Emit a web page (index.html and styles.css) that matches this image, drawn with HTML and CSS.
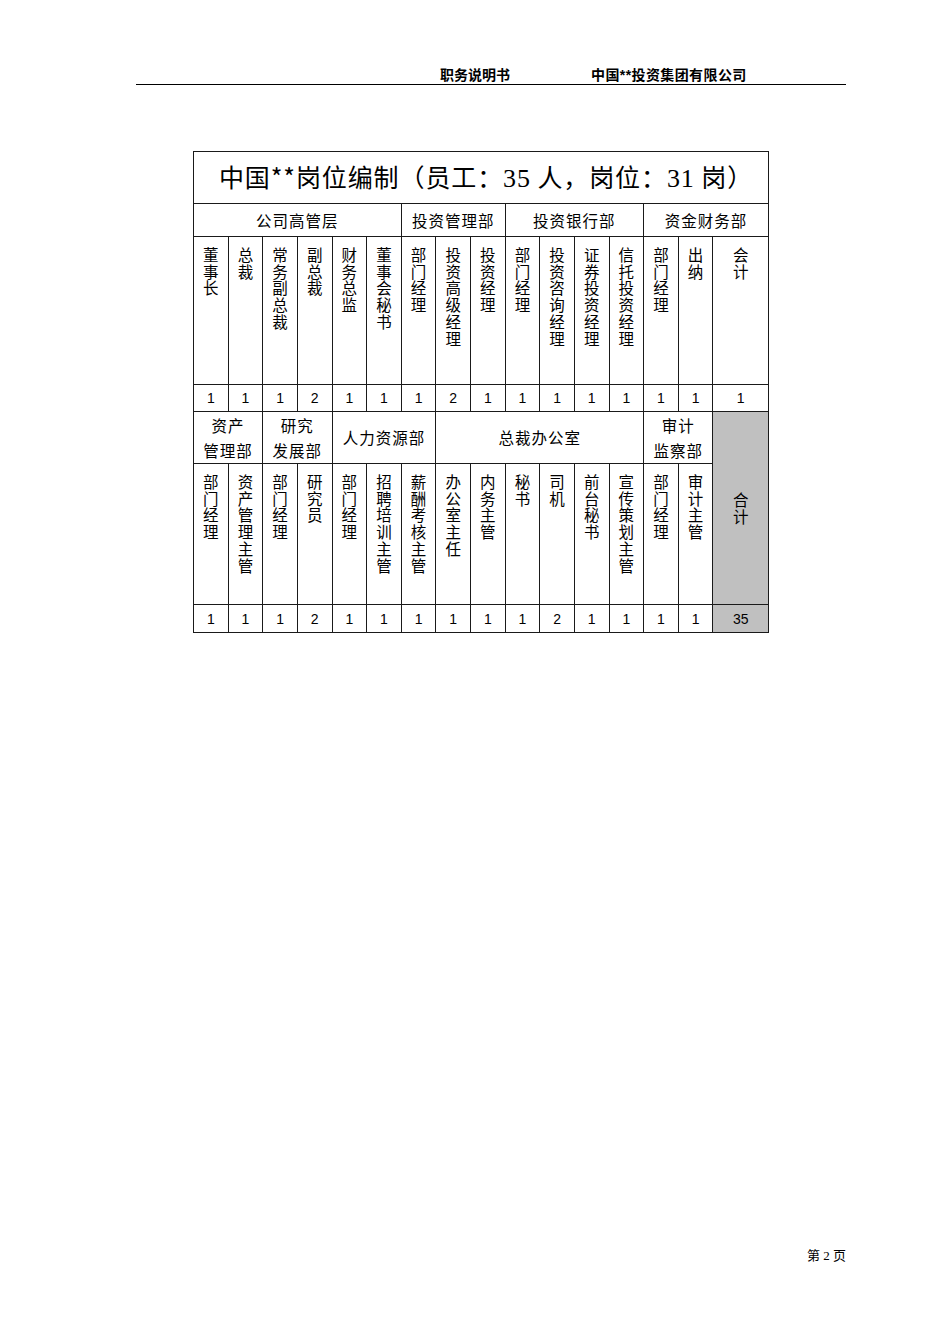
FILE: index.html
```html
<!DOCTYPE html>
<html lang="zh-CN">
<head>
<meta charset="utf-8">
<title>职务说明书</title>
<link rel="stylesheet" href="styles.css">
</head>
<body>
<div class="page">
  <header class="doc-header">
    <span class="doc-title">职务说明书</span>
    <span class="doc-company">中国**投资集团有限公司</span>
  </header>

  <table class="staff">
    <colgroup>
      <col class="c"><col class="c"><col class="c"><col class="c"><col class="c"><col class="c"><col class="c"><col class="c">
      <col class="c"><col class="c"><col class="c"><col class="c"><col class="c"><col class="c"><col class="c"><col class="c-wide">
    </colgroup>
    <tr class="r-title">
      <td colspan="16" class="title">中国**岗位编制（员工：<span class="num-serif">35</span> 人，岗位：<span class="num-serif">31</span> 岗）</td>
    </tr>
    <tr class="r-dept">
      <td colspan="6" class="dept">公司高管层</td>
      <td colspan="3" class="dept">投资管理部</td>
      <td colspan="4" class="dept">投资银行部</td>
      <td colspan="3" class="dept">资金财务部</td>
    </tr>
    <tr class="r-vert1">
      <td class="vc"><div class="v">董事长</div></td>
      <td class="vc"><div class="v">总裁</div></td>
      <td class="vc"><div class="v">常务副总裁</div></td>
      <td class="vc"><div class="v">副总裁</div></td>
      <td class="vc"><div class="v">财务总监</div></td>
      <td class="vc"><div class="v">董事会秘书</div></td>
      <td class="vc"><div class="v">部门经理</div></td>
      <td class="vc"><div class="v">投资高级经理</div></td>
      <td class="vc"><div class="v">投资经理</div></td>
      <td class="vc"><div class="v">部门经理</div></td>
      <td class="vc"><div class="v">投资咨询经理</div></td>
      <td class="vc"><div class="v">证券投资经理</div></td>
      <td class="vc"><div class="v">信托投资经理</div></td>
      <td class="vc"><div class="v">部门经理</div></td>
      <td class="vc"><div class="v">出纳</div></td>
      <td class="vc"><div class="v">会计</div></td>
    </tr>
    <tr class="r-num1">
      <td class="n">1</td><td class="n">1</td><td class="n">1</td><td class="n">2</td><td class="n">1</td><td class="n">1</td>
      <td class="n">1</td><td class="n">2</td><td class="n">1</td>
      <td class="n">1</td><td class="n">1</td><td class="n">1</td><td class="n">1</td>
      <td class="n">1</td><td class="n">1</td><td class="n">1</td>
    </tr>
    <tr class="r-dept2">
      <td colspan="2" class="dept2">资产<br>管理部</td>
      <td colspan="2" class="dept2">研究<br>发展部</td>
      <td colspan="3" class="dept2">人力资源部</td>
      <td colspan="6" class="dept2">总裁办公室</td>
      <td colspan="2" class="dept2">审计<br>监察部</td>
      <td rowspan="2" class="total"><div class="v">合计</div></td>
    </tr>
    <tr class="r-vert2">
      <td class="vc"><div class="v">部门经理</div></td>
      <td class="vc"><div class="v">资产管理主管</div></td>
      <td class="vc"><div class="v">部门经理</div></td>
      <td class="vc"><div class="v">研究员</div></td>
      <td class="vc"><div class="v">部门经理</div></td>
      <td class="vc"><div class="v">招聘培训主管</div></td>
      <td class="vc"><div class="v">薪酬考核主管</div></td>
      <td class="vc"><div class="v">办公室主任</div></td>
      <td class="vc"><div class="v">内务主管</div></td>
      <td class="vc"><div class="v">秘书</div></td>
      <td class="vc"><div class="v">司机</div></td>
      <td class="vc"><div class="v">前台秘书</div></td>
      <td class="vc"><div class="v">宣传策划主管</div></td>
      <td class="vc"><div class="v">部门经理</div></td>
      <td class="vc"><div class="v">审计主管</div></td>
    </tr>
    <tr class="r-num2">
      <td class="n">1</td><td class="n">1</td>
      <td class="n">1</td><td class="n">2</td>
      <td class="n">1</td><td class="n">1</td><td class="n">1</td>
      <td class="n">1</td><td class="n">1</td><td class="n">1</td><td class="n">2</td><td class="n">1</td><td class="n">1</td>
      <td class="n">1</td><td class="n">1</td>
      <td class="n grey">35</td>
    </tr>
  </table>

  <footer class="doc-footer">第 2 页</footer>
</div>
</body>
</html>
```

FILE: styles.css
```css
html, body {
  margin: 0;
  padding: 0;
  background: #fff;
}

body {
  font-family: "Noto Sans CJK SC", "Liberation Sans", sans-serif;
  color: #000;
}

.page {
  width: 950px;
  height: 1344px;
  display: flex;
  flex-direction: column;
  box-sizing: border-box;
  padding: 66px 104px 0 136px;
}

.doc-header {
  display: flex;
  align-items: flex-end;
  height: 18px;
  border-bottom: 1.5px solid #000;
  padding-left: 304px;
  font-family: "Liberation Sans", "Noto Sans CJK SC", sans-serif;
  font-weight: bold;
  font-size: 14px;
  line-height: 18px;
}

.doc-company {
  margin-left: 81px;
  letter-spacing: 0.4px;
}

.staff {
  margin: 66px 0 0 57px;
  width: 575px;
  border-collapse: collapse;
  table-layout: fixed;
  font-size: 15px;
}

.staff col.c { width: 34.63px; }
.staff col.c-wide { width: 55.5px; }

.staff td {
  border: 1px solid #1a1a1a;
  padding: 0;
  text-align: center;
}

.r-title { height: 52px; }
.r-dept { height: 33px; }
.r-vert1 { height: 148px; }
.r-num1 { height: 27px; }
.r-dept2 { height: 52px; }
.r-vert2 { height: 141px; }
.r-num2 { height: 28px; }

.staff td.title {
  font-size: 25px;
  line-height: 30px;
  letter-spacing: 0.9px;
  padding: 0 0 1px 10px;
}

.num-serif {
  font-family: "Liberation Serif", serif;
  font-size: 26px;
}

.dept {
  font-size: 15.5px;
  line-height: 20px;
  letter-spacing: 1px;
}

.dept2 {
  font-size: 15.5px;
  line-height: 25px;
  letter-spacing: 1px;
}

.staff td.vc {
  vertical-align: top;
  padding-top: 9px;
}

.v {
  width: 1em;
  margin: 0 auto;
  word-break: break-all;
  line-height: 16.7px;
  font-size: 15.5px;
}

.n {
  font-family: "Liberation Sans", sans-serif;
  font-size: 14px;
  line-height: 16px;
}

.total {
  background: #c0c0c0;
  vertical-align: middle;
}

.grey {
  background: #c0c0c0;
}

.doc-footer {
  margin-top: auto;
  margin-bottom: 80px;
  text-align: right;
  font-family: "Liberation Serif", "Noto Sans CJK SC", serif;
  font-size: 13px;
  line-height: 16px;
}
```
